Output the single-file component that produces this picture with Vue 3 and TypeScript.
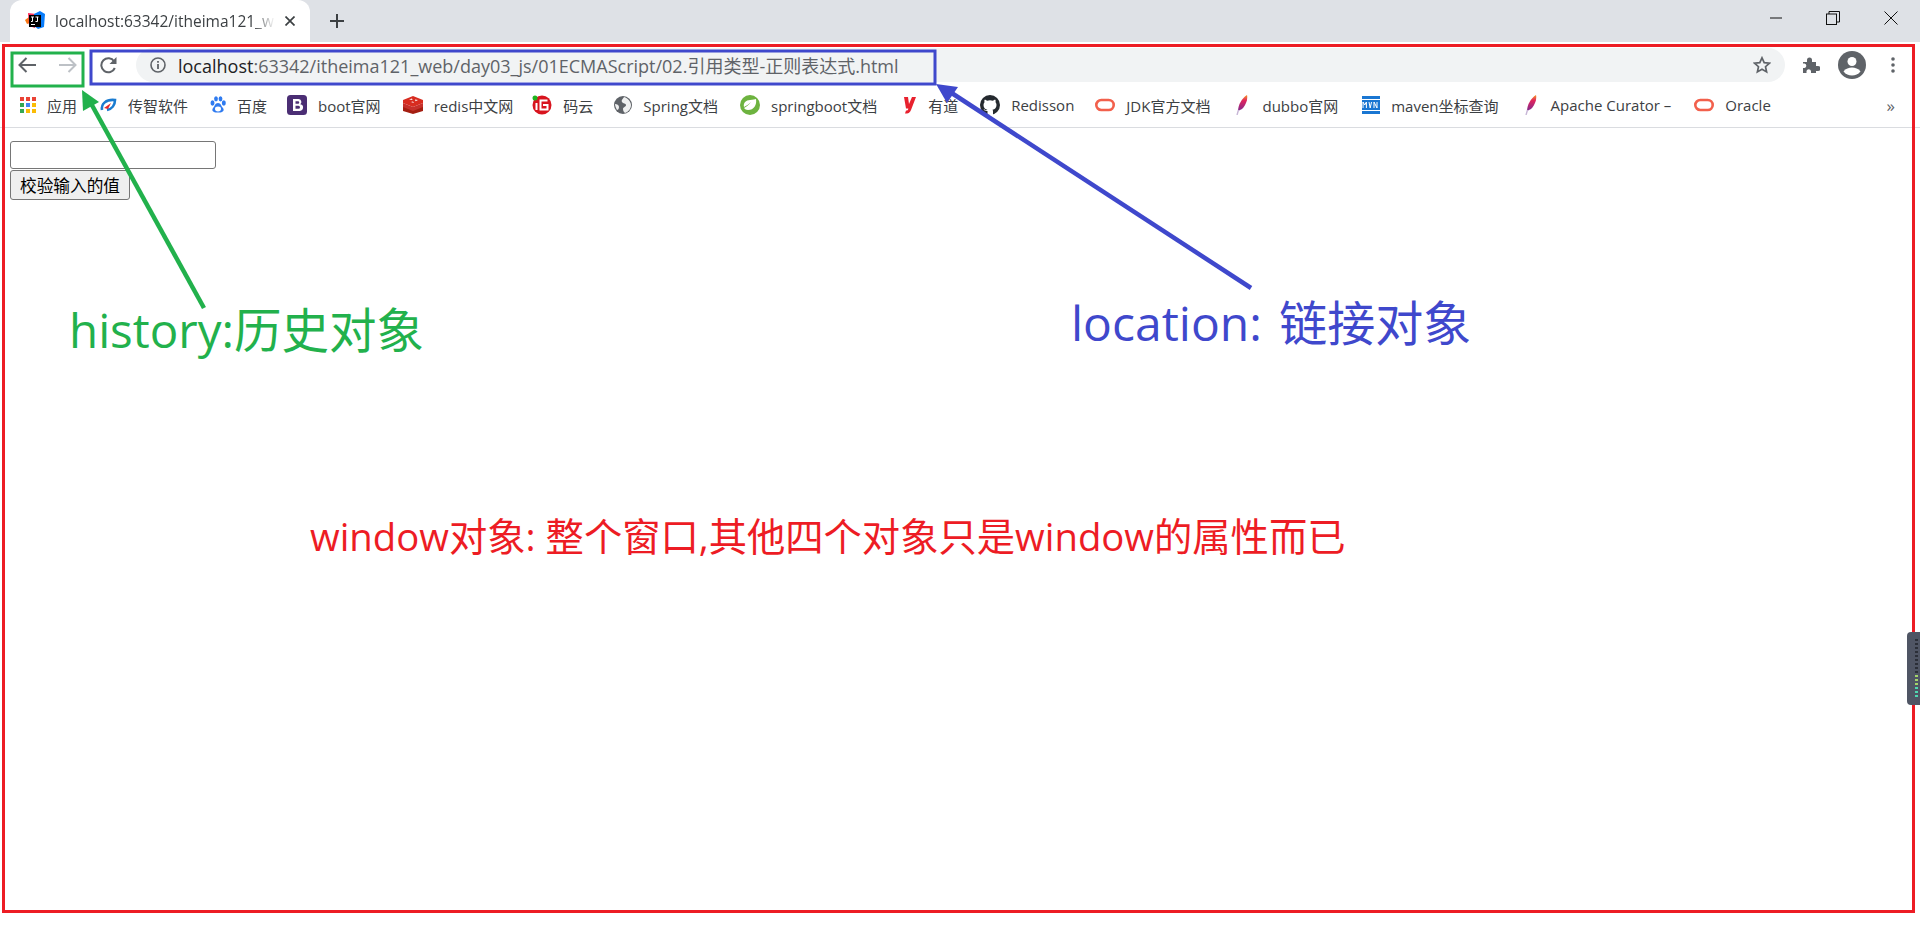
<template>
  <div class="browser">
    <div class="tabstrip">
      <div class="tab">
        <svg class="favicon" viewBox="0 0 20 20" width="20" height="20">
          <path d="M0 9l4-3 1 6-3 1z" fill="#f97a12" />
          <path d="M3 2l8 1-1 14-6-2z" fill="#fe315d" />
          <path d="M9 3l6-3 5 3-1 13-6 2-4-3z" fill="#087cfa" />
          <rect x="4" y="4" width="12" height="12" fill="#000" />
          <path d="M6 6h3M7.500 6v4.500H6M10.500 6h3M12.500 6v4.500h-2M6 13.500h4" stroke="#fff" stroke-width="1" fill="none" />
        </svg>
        <span class="tab-title">localhost:63342/itheima121_web</span>
        <svg class="tab-close" viewBox="0 0 10 10" width="10" height="10">
          <path d="M0.500 0.500l9 9M9.500 0.500l-9 9" stroke="#3c4043" stroke-width="1.700" />
        </svg>
      </div>
      <svg class="new-tab" viewBox="0 0 14 14" width="14" height="14">
        <path d="M7 0v14M0 7h14" stroke="#3c4043" stroke-width="2" />
      </svg>
      <div class="win-controls">
        <svg viewBox="0 0 12 2" width="12" height="2"><path d="M0 1h12" stroke="#111" stroke-width="1" /></svg>
        <svg viewBox="0 0 14 14" width="14" height="14">
          <rect x="0.500" y="3" width="10" height="10.500" fill="none" stroke="#111" />
          <path d="M3 3V0.500h10.500V11H10.500" fill="none" stroke="#111" />
        </svg>
        <svg viewBox="0 0 14 14" width="14" height="14"><path d="M0.500 0.500l13 13M13.500 0.500l-13 13" stroke="#111" /></svg>
      </div>
    </div>

    <div class="toolbar">
      <svg class="nav" viewBox="0 0 18 16" width="18" height="16">
        <path d="M18 8H2M8.500 1L1.500 8l7 7" fill="none" stroke="#5f6368" stroke-width="2" />
      </svg>
      <svg class="nav forward" viewBox="0 0 18 16" width="18" height="16">
        <path d="M0 8h16M9.500 1l7 7-7 7" fill="none" stroke="#bdc1c6" stroke-width="2" />
      </svg>
      <svg class="reload" viewBox="0 0 18 18" width="18" height="18">
        <path d="M14.800 12a7 7 0 1 1-.6-6.500" fill="none" stroke="#5f6368" stroke-width="2" />
        <path d="M16.500 1v7h-7z" fill="#5f6368" />
      </svg>
      <div class="omnibox">
        <svg class="info" viewBox="0 0 16 16" width="16" height="16">
          <circle cx="8" cy="8" r="7" fill="none" stroke="#5f6368" stroke-width="1.600" />
          <path d="M8 7v5M8 4v1.800" stroke="#5f6368" stroke-width="1.800" />
        </svg>
        <span class="url"><b>localhost</b>:63342/itheima121_web/day03_js/01ECMAScript/02.引用类型-正则表达式.html</span>
        <svg class="star" viewBox="0 0 18 18" width="18" height="18">
          <path d="M9 1.800l2.200 4.800 5.200.6-3.900 3.500 1.100 5.200L9 13.300l-4.600 2.600 1.100-5.200L1.600 7.200l5.200-.6z" fill="none" stroke="#5f6368" stroke-width="1.700" />
        </svg>
      </div>
      <svg class="puzzle" viewBox="0 0 18 18" width="18" height="18">
        <path d="M1 6h4V4a2.500 2.500 0 0 1 5 0v2h4v4h2a2.500 2.500 0 0 1 0 5h-2v2H9v-2a2.300 2.300 0 0 0-4.500 0v2H1v-5h1.500a2.300 2.300 0 0 0 0-4.500H1z" fill="#5f6368" />
      </svg>
      <svg class="avatar" viewBox="0 0 28 28" width="28" height="28">
        <circle cx="14" cy="14" r="14" fill="#5f6368" />
        <circle cx="14" cy="10.500" r="4.500" fill="#fff" />
        <path d="M5.500 20.500c2-3 5.500-4 8.500-4s6.500 1 8.500 4a11 11 0 0 1-17 0z" fill="#fff" />
      </svg>
      <svg class="dots" viewBox="0 0 4 16" width="4" height="16">
        <circle cx="2" cy="2" r="1.800" fill="#5f6368" />
        <circle cx="2" cy="8" r="1.800" fill="#5f6368" />
        <circle cx="2" cy="14" r="1.800" fill="#5f6368" />
      </svg>
    </div>

    <div class="bookmarks">
      <div v-for="b in bookmarks" :key="b.label" class="bookmark" :style="{ marginLeft: (b.nudge ?? 0) + 'px' }">
        <svg v-if="b.icon === 'apps'" viewBox="0 0 16 16" width="16" height="16">
          <rect v-for="d in appDots" :key="d.x + '-' + d.y" :x="d.x" :y="d.y" width="4" height="4" :fill="d.c" />
        </svg>
        <svg v-else-if="b.icon === 'czbk'" viewBox="0 0 18 16" width="18" height="16">
          <path d="M3 13C2 7 7 2 16 3c0 5-3 9-8 10" fill="none" stroke="#1a7bd0" stroke-width="2.600" />
          <path d="M5 11l7-5-3 6z" fill="#e0262d" />
        </svg>
        <svg v-else-if="b.icon === 'baidu'" viewBox="0 0 16 18" width="16" height="18">
          <ellipse cx="2.500" cy="7" rx="2" ry="2.700" fill="#2f7bf0" />
          <ellipse cx="6" cy="2.800" rx="1.900" ry="2.600" fill="#2f7bf0" />
          <ellipse cx="10.500" cy="2.800" rx="1.900" ry="2.600" fill="#2f7bf0" />
          <ellipse cx="13.800" cy="7" rx="2" ry="2.700" fill="#2f7bf0" />
          <path d="M8 7c-3 0-3 3-5 5-2 3 1 5 5 4.500 4 .5 7-1.500 5-4.500-2-2-2-5-5-5z" fill="#2f7bf0" />
          <ellipse cx="8" cy="13" rx="3" ry="2.400" fill="#fff" />
        </svg>
        <svg v-else-if="b.icon === 'boot'" viewBox="0 0 20 20" width="20" height="20">
          <rect width="20" height="20" rx="3.500" fill="#4b2e74" />
          <path d="M6 4h5.500a3 3 0 0 1 1.800 5.300A3.200 3.200 0 0 1 12 16H6zM8.500 6.200v2.500h2.500a1.250 1.250 0 0 0 0-2.500zM8.500 10.800v3h3a1.500 1.500 0 0 0 0-3z" fill="#fff" fill-rule="evenodd" />
        </svg>
        <svg v-else-if="b.icon === 'redis'" viewBox="0 0 20 18" width="20" height="18">
          <path d="M0 10l10 4 10-4v5l-10 3-10-3z" fill="#a41e11" />
          <path d="M0 7l10 4 10-4v4l-10 4-10-4z" fill="#c6302b" />
          <path d="M0 4L10 0l10 4v3l-10 4L0 7z" fill="#d82c20" />
          <path d="M6 3.500l3-1 .5 1.500zM12 3.500l3 .5-2.500 1.200zM8 6l2-.5 1 1.500z" fill="#fff" />
        </svg>
        <svg v-else-if="b.icon === 'gitee'" viewBox="0 0 20 20" width="20" height="20">
          <circle cx="10" cy="10" r="9.500" fill="#d8141e" />
          <path d="M4.500 8v7" stroke="#fff" stroke-width="2" />
          <path d="M15.500 5.500H8.500v9h7V10H11" fill="none" stroke="#fff" stroke-width="2" />
          <circle cx="3" cy="3" r="2.500" fill="#1fb41f" />
        </svg>
        <svg v-else-if="b.icon === 'globe'" viewBox="0 0 18 18" width="18" height="18">
          <circle cx="9" cy="9" r="9" fill="#5f6368" />
          <path d="M10 1c-1 2-3 3-2 5s4 1 4 3-3 2-3 4 1 3 2 4c3-1 6-4 6-8 0-3-3-7-7-8zM1 8c2 0 4 1 4 3s-1 3-2 3C2 12 1 10 1 8z" fill="#fff" opacity="0.9" />
        </svg>
        <svg v-else-if="b.icon === 'leaf'" viewBox="0 0 20 20" width="20" height="20">
          <circle cx="10" cy="10" r="10" fill="#6db33f" />
          <path d="M16 4c1 6-2 11-8 11-2 0-3-1-4-2 2-1 5-3 7-6-2 2-5 4-7 5-1-4 2-7 6-7 3 0 5-1 6-1z" fill="#fff" />
        </svg>
        <svg v-else-if="b.icon === 'youdao'" viewBox="0 0 14 18" width="14" height="18">
          <path d="M1 1h4l1 7 3-7h4L8 14c-1 3-3 3.500-6 3.500l1-3c2 0 2-.5 2.300-2H3z" fill="#e8212e" />
        </svg>
        <svg v-else-if="b.icon === 'github'" viewBox="0 0 20 20" width="20" height="20">
          <circle cx="10" cy="10" r="10" fill="#24292e" />
          <path d="M7.500 19.500V16c-3 .5-3.500-1.500-4-2 1 0 1.500 1 2 1.200.8.300 1.500 0 2-.4-2.500-.5-4-2-4-4.800 0-1.200.4-2 1-2.800-.2-.8-.2-1.700.1-2.400 1 0 1.900.5 2.500 1a8 8 0 0 1 5.800 0c.6-.5 1.500-1 2.500-1 .3.700.3 1.600.1 2.400.6.800 1 1.600 1 2.800 0 2.800-1.500 4.300-4 4.800.5.500.5 1 .5 2v3.700z" fill="#fff" />
        </svg>
        <svg v-else-if="b.icon === 'oracle'" viewBox="0 0 20 14" width="20" height="14">
          <rect x="1.300" y="2" width="17.400" height="10" rx="5" fill="none" stroke="#f2604c" stroke-width="2.600" />
        </svg>
        <svg v-else-if="b.icon === 'feather'" viewBox="0 0 18 20" width="18" height="20">
          <defs>
            <linearGradient id="quill" x1="0" y1="0" x2="0" y2="1">
              <stop offset="0" stop-color="#f69923" />
              <stop offset="0.35" stop-color="#e0245e" />
              <stop offset="1" stop-color="#7d2a8f" />
            </linearGradient>
          </defs>
          <path d="M14 0c1 4-1 10-5 14l-4 2c0-6 4-13 9-16z" fill="url(#quill)" />
          <path d="M5.500 15l-1.500 5" stroke="#c7b6d6" stroke-width="1.400" />
        </svg>
        <svg v-else-if="b.icon === 'mvn'" viewBox="0 0 18 18" width="18" height="18">
          <rect width="18" height="18" fill="#1976d2" />
          <rect y="3" width="18" height="1" fill="#fff" />
          <rect y="14" width="18" height="1" fill="#fff" />
          <path d="M1 12V6l1.700 3L4.400 6v6M7 6l1.200 6L9.500 6M12 12V6l3 6V6" fill="none" stroke="#fff" stroke-width="1" />
        </svg>
        <span>{{ b.label }}</span>
      </div>
      <span class="more">»</span>
    </div>

    <div class="page">
      <input type="text" />
      <button type="button">校验输入的值</button>
    </div>

    <!-- annotations drawn on top of the screenshot -->
    <svg class="marks" viewBox="0 0 1920 929" width="1920" height="929">
      <rect x="3.500" y="45.500" width="1910" height="866" fill="none" stroke="#ed1c24" stroke-width="3" />
      <rect x="12" y="53" width="71" height="33" fill="none" stroke="#22b14c" stroke-width="3" />
      <rect x="91" y="51" width="844" height="33" fill="none" stroke="#3f48cc" stroke-width="3" />
      <path d="M204 308L88 98" stroke="#22b14c" stroke-width="4.500" fill="none" />
      <path d="M82 90l17 12-16 9z" fill="#22b14c" />
      <path d="M1251 288L944 88" stroke="#3f48cc" stroke-width="4.500" fill="none" />
      <path d="M936 84l22 3-11 16z" fill="#3f48cc" />
    </svg>
    <span class="note history">history:历史对象</span>
    <span class="note location">location: 链接对象</span>
    <span class="note window">window对象: 整个窗口,其他四个对象只是window的属性而已</span>
    <div class="side-widget">
      <div class="meter"></div>
    </div>
  </div>
</template>

<script setup lang="ts">
interface Bookmark {
  label: string;
  icon: string;
  // small correction, the fonts here are not quite the reference's widths
  nudge?: number;
}

const bookmarks: Bookmark[] = [
  { label: '应用', icon: 'apps' },
  { label: '传智软件', icon: 'czbk' },
  { label: '百度', icon: 'baidu' },
  { label: 'boot官网', icon: 'boot', nudge: -2 },
  { label: 'redis中文网', icon: 'redis' },
  { label: '码云', icon: 'gitee', nudge: -3 },
  { label: 'Spring文档', icon: 'globe', nudge: -1 },
  { label: 'springboot文档', icon: 'leaf' },
  { label: '有道', icon: 'youdao', nudge: 4 },
  { label: 'Redisson', icon: 'github' },
  { label: 'JDK官方文档', icon: 'oracle', nudge: -1 },
  { label: 'dubbo官网', icon: 'feather', nudge: 1 },
  { label: 'maven坐标查询', icon: 'mvn', nudge: 2 },
  { label: 'Apache Curator –', icon: 'feather', nudge: 1 },
  { label: 'Oracle', icon: 'oracle', nudge: 1 },
];

const appColors = ['#ea4335', '#ea4335', '#ea4335', '#34a853', '#4285f4', '#fbbc05', '#34a853', '#fbbc05', '#fbbc05'];
const appDots = appColors.map((c, i) => ({ x: (i % 3) * 6, y: Math.floor(i / 3) * 6, c }));
</script>

<style>
html,
body {
  margin: 0;
  background: #fff;
  overflow: hidden;
}
</style>

<style scoped>
.browser {
  position: relative;
  width: 1920px;
  height: 929px;
  overflow: hidden;
  background: #fff;
  font-family: 'Open Sans', 'Noto Sans CJK SC', sans-serif;
}

.tabstrip {
  display: flex;
  align-items: center;
  height: 42px;
  padding-left: 10px;
  background: #dee1e6;
}

.tab {
  display: flex;
  align-items: center;
  box-sizing: border-box;
  width: 300px;
  height: 42px;
  padding: 0 15px;
  border-radius: 12px 12px 0 0;
  background: #fff;
}

.favicon {
  flex: none;
}

.tab-title {
  flex: 1;
  margin-left: 10px;
  overflow: hidden;
  white-space: nowrap;
  font-size: 15.500px;
  color: #3c4043;
  -webkit-mask-image: linear-gradient(to right, #000 90%, transparent);
  mask-image: linear-gradient(to right, #000 90%, transparent);
}

.tab-close {
  flex: none;
  margin-left: 10px;
}

.new-tab {
  margin-left: 20px;
}

.win-controls {
  display: flex;
  align-items: center;
  gap: 44px;
  margin-left: auto;
  padding-right: 22px;
  padding-bottom: 6px;
}

.toolbar {
  display: flex;
  align-items: center;
  height: 46px;
  padding-left: 18px;
}

.forward {
  margin-left: 23px;
}

.reload {
  margin-left: 23px;
}

.omnibox {
  display: flex;
  align-items: center;
  box-sizing: border-box;
  width: 1649px;
  height: 34px;
  margin-left: 18px;
  padding: 0 14px 0 14px;
  border-radius: 17px;
  background: #f1f3f4;
}

.url {
  flex: 1;
  margin-left: 12px;
  font-size: 18px;
  color: #5f6368;
  white-space: nowrap;
}

.url b {
  font-weight: 400;
  color: #202124;
}

.puzzle {
  margin-left: 17px;
}

.avatar {
  margin-left: 18px;
}

.dots {
  margin-left: 25px;
}

.bookmarks {
  display: flex;
  align-items: center;
  gap: 22px;
  height: 34px;
  padding: 0 0 5px 20px;
  border-bottom: 1px solid #dadce0;
  font-size: 15px;
  color: #3c4043;
  white-space: nowrap;
}

.bookmark {
  display: flex;
  align-items: center;
  gap: 11px;
}

.more {
  margin-left: auto;
  padding-right: 25px;
  font-size: 17px;
  color: #5f6368;
}

.page {
  padding: 13px 10px;
  font-family: 'Liberation Sans', 'Noto Sans CJK SC', sans-serif;
}

.page input {
  display: block;
  box-sizing: border-box;
  width: 206px;
  height: 28px;
  padding: 0;
  border: 1px solid #767676;
  border-radius: 3px;
  background: #fff;
}

.page button {
  display: block;
  box-sizing: border-box;
  width: 120px;
  height: 30px;
  margin-top: 1px;
  padding: 0;
  border: 1px solid #767676;
  border-radius: 3px;
  background: #efefef;
  font-family: inherit;
  font-size: 16.670px;
  color: #000;
}

.marks {
  position: absolute;
  top: 0;
  left: 0;
  pointer-events: none;
}

.note {
  position: absolute;
  line-height: 1;
  white-space: nowrap;
}

.history {
  top: 306px;
  left: 69px;
  font-size: 47.500px;
  color: #22b14c;
}

.location {
  top: 299px;
  left: 1071px;
  font-size: 48px;
  word-spacing: 5px;
  color: #3f48cc;
}

.window {
  top: 517px;
  left: 310px;
  font-size: 38.300px;
  color: #ed1c24;
}

.side-widget {
  position: absolute;
  top: 632px;
  right: 0;
  width: 13px;
  height: 73px;
  border-radius: 4px 0 0 4px;
  background: #4f5564;
}

.meter {
  position: absolute;
  top: 7px;
  right: 2px;
  width: 3px;
  height: 58px;
  background:
    repeating-linear-gradient(to bottom, transparent 0 2px, #4f5564 2px 4px),
    linear-gradient(to bottom, #2b2f38 0 60%, #a5d46a 60% 80%, #4fd8b0 80%);
}
</style>
